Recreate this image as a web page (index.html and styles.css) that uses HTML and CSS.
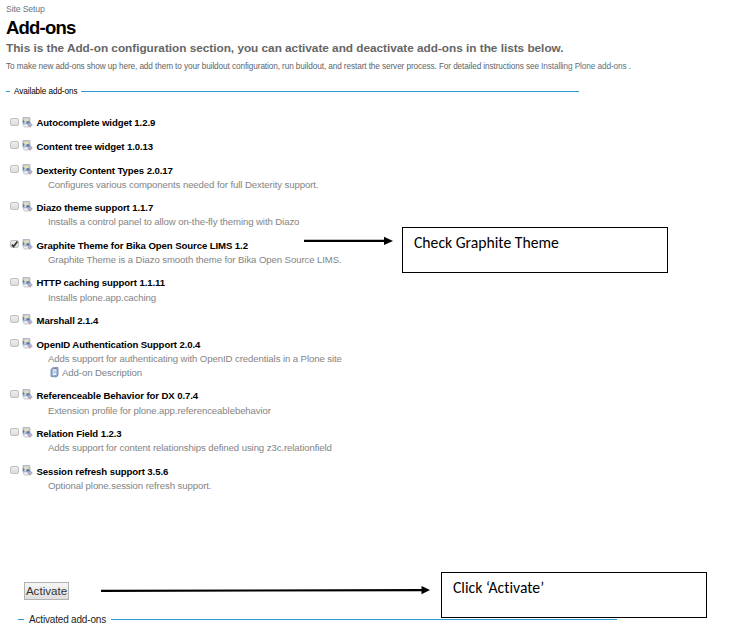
FILE: index.html
```
<!DOCTYPE html>
<html lang="en">
<head>
<meta charset="utf-8">
<title>Add-ons</title>
<link rel="stylesheet" href="styles.css">
</head>
<body>
<svg width="0" height="0" class="defs" aria-hidden="true">
  <symbol id="addon" viewBox="0 0 11 11">
    <path d="M1 .5h6.500l.5 1V7H1z" fill="#b9cbe2" stroke="#9aa9bf" stroke-width=".7"/>
    <path d="M2.500 1.500h4v3h-4z" fill="#eedf9f"/>
    <path d="M.8 2.800 2.600 4.600.8 6.400z" fill="#5f7596"/>
    <path d="M4.500 4.300h3V6.500h-3z" fill="#56709a"/>
    <path d="M1 7h5.500v3H2.200z" fill="#edf0f4" stroke="#a3acb9" stroke-width=".6"/>
    <path d="M8 5.600 10.300 8 8 10.300 5.800 8z" fill="#b1b1d8" stroke="#8e8eba" stroke-width=".6"/>
    <circle cx="8.300" cy="9.500" r=".7" fill="#cc9b90"/>
  </symbol>
  <symbol id="doc" viewBox="0 0 9 11">
    <path d="M2.500.8 8 .6v7.600L6.500 10 1 9.500V2.500z" fill="#8ea9d0" stroke="#6982ad" stroke-width=".8"/>
    <path d="M2.800 2.500 6.300 2v5.800l-3.500.5z" fill="#e6eefa"/>
    <path d="M3.400 4h2.300M3.400 5.500h2.300" stroke="#7994c2" stroke-width=".6"/>
    <path d="M4 .8h2.300v1H4z" fill="#b3675e"/>
  </symbol>
</svg>
<header>
  <a class="up">Site Setup</a>
  <h1>Add-ons</h1>
  <p class="lead">This is the Add-on configuration section, you can activate and deactivate add-ons in the lists below.</p>
  <p class="help">To make new add-ons show up here, add them to your buildout configuration, run buildout, and restart the server process. For detailed instructions see <a>Installing Plone add-ons</a> .</p>
</header>
<div class="legend available"><span>Available add-ons</span></div>
<ul class="addons">
  <li><i class="box"></i><svg class="ico"><use href="#addon"/></svg><div><h2>Autocomplete widget 1.2.9</h2></div></li>
  <li><i class="box"></i><svg class="ico"><use href="#addon"/></svg><div><h2>Content tree widget 1.0.13</h2></div></li>
  <li><i class="box"></i><svg class="ico"><use href="#addon"/></svg><div><h2>Dexterity Content Types 2.0.17</h2><p>Configures various components needed for full Dexterity support.</p></div></li>
  <li><i class="box"></i><svg class="ico"><use href="#addon"/></svg><div><h2>Diazo theme support 1.1.7</h2><p>Installs a control panel to allow on-the-fly theming with Diazo</p></div></li>
  <li><i class="box"><svg viewBox="0 0 9 9"><path d="M1.800 4.600 3.600 6.500 7.400 1.600" fill="none" stroke="#333" stroke-width="1.700"/></svg></i><svg class="ico"><use href="#addon"/></svg><div><h2>Graphite Theme for Bika Open Source LIMS 1.2</h2><p>Graphite Theme is a Diazo smooth theme for Bika Open Source LIMS.</p></div></li>
  <li><i class="box"></i><svg class="ico"><use href="#addon"/></svg><div><h2>HTTP caching support 1.1.11</h2><p>Installs plone.app.caching</p></div></li>
  <li><i class="box"></i><svg class="ico"><use href="#addon"/></svg><div><h2>Marshall 2.1.4</h2></div></li>
  <li><i class="box"></i><svg class="ico"><use href="#addon"/></svg><div><h2>OpenID Authentication Support 2.0.4</h2><p>Adds support for authenticating with OpenID credentials in a Plone site</p><p class="more"><svg><use href="#doc"/></svg><a>Add-on Description</a></p></div></li>
  <li><i class="box"></i><svg class="ico"><use href="#addon"/></svg><div><h2>Referenceable Behavior for DX 0.7.4</h2><p>Extension profile for plone.app.referenceablebehavior</p></div></li>
  <li><i class="box"></i><svg class="ico"><use href="#addon"/></svg><div><h2>Relation Field 1.2.3</h2><p>Adds support for content relationships defined using z3c.relationfield</p></div></li>
  <li><i class="box"></i><svg class="ico"><use href="#addon"/></svg><div><h2>Session refresh support 3.5.6</h2><p>Optional plone.session refresh support.</p></div></li>
</ul>
<button class="activate">Activate</button>
<div class="legend activated"><span>Activated add-ons</span></div>

<svg class="arrow arrow-theme" viewBox="0 0 90 10"><path d="M0 4.900h82" stroke="#000" stroke-width="2.200"/><path d="M80 .7 89 4.900 80 9.100z"/></svg>
<div class="note note-theme">Check Graphite Theme</div>
<svg class="arrow arrow-activate" viewBox="0 0 330 10"><path d="M0 5.900 322 5.100" stroke="#000" stroke-width="2.200"/><path d="M320.500 .9 329 5 320.500 9.200z"/></svg>
<div class="note note-activate">Click ‘Activate’</div>
</body>
</html>
```
FILE: styles.css
```
* { box-sizing: border-box; }
body {
  position: relative;
  width: 744px;
  height: 636px;
  margin: 0;
  overflow: hidden;
  background: #fff;
  font-family: "Liberation Sans", Arial, sans-serif;
  color: #000;
}
.defs { position: absolute; }
h1, h2, p, ul { margin: 0; padding: 0; }
header { height: 86px; padding: 4px 0 0 6px; white-space: nowrap; }
.up { display: block; font-size: 8.7px; line-height: 11px; letter-spacing: -0.15px; color: #64798a; }
h1 { margin-top: 2px; font-size: 18.5px; line-height: 22px; letter-spacing: -0.8px; }
.lead { margin-top: 2px; font-size: 11.8px; line-height: 15px; letter-spacing: -0.02px; font-weight: bold; color: #666; }
.help { margin-top: 5px; font-size: 8.25px; line-height: 12px; letter-spacing: -0.11px; color: #606468; }
.help a { color: #5b7283; }
.legend { display: flex; align-items: center; white-space: nowrap; }
.legend::before, .legend::after { content: ""; height: 1px; background: #2c9bd2; }
.legend::after { flex: 1; }
.available { width: 573px; height: 11px; margin-left: 6px; font-size: 8.2px; letter-spacing: -0.09px; }
.available::before { width: 4px; }
.available span { margin: 0 4px; }
.addons { height: 466px; padding: 20px 0 0 10px; list-style: none; white-space: nowrap; }
.addons li { display: flex; margin-bottom: 9.35px; }
.addons div { margin-top: -0.6px; margin-bottom: 0.6px; }
.box {
  flex: none;
  width: 9px;
  height: 8px;
  margin-top: 0.5px;
  border: 1px solid #c0c0c0;
  border-radius: 2px;
  background: linear-gradient(#eee, #ddd);
}
.box svg { display: block; width: 9px; height: 9px; margin: -1px; }
.ico { flex: none; width: 11px; height: 11px; margin: -0.5px 3.5px 0 3px; }
h2 { font-size: 9.6px; line-height: 14.2px; letter-spacing: -0.09px; }
.addons p { padding-left: 11.5px; font-size: 9.6px; line-height: 14.1px; letter-spacing: -0.09px; color: #848484; }
.addons .more { display: flex; color: #7a858e; }
.more svg { width: 9px; height: 11px; margin: 1px 3.5px 0 1.5px; }
.activate {
  display: block;
  width: 45px;
  height: 18px;
  margin: 19px 0 0 24px;
  padding: 0;
  border: 1px solid #b2b2b2;
  border-radius: 0;
  background: linear-gradient(#f6f6f6, #dedede);
  font: 11.6px/16px "Liberation Sans", Arial, sans-serif;
  color: #333;
}
.activated { width: 599px; height: 12px; margin: 13px 0 0 18px; font-size: 10px; letter-spacing: -0.18px; color: #222; }
.activated::before { width: 6px; }
.activated span { margin: 0 5px; }
.arrow { position: absolute; height: 10px; }
.arrow-theme { left: 304px; top: 236px; width: 90px; }
.arrow-activate { left: 101px; top: 585px; width: 330px; }
.note {
  position: absolute;
  width: 266px;
  height: 46px;
  padding: 5px 11px;
  border: 1px solid #000;
  background: #fff;
  font: 15.7px/20px Carlito, Calibri, Lato, sans-serif;
  font-variant-ligatures: none;
}
.note-theme { left: 402px; top: 227px; }
.note-activate { left: 441px; top: 572px; }
```
